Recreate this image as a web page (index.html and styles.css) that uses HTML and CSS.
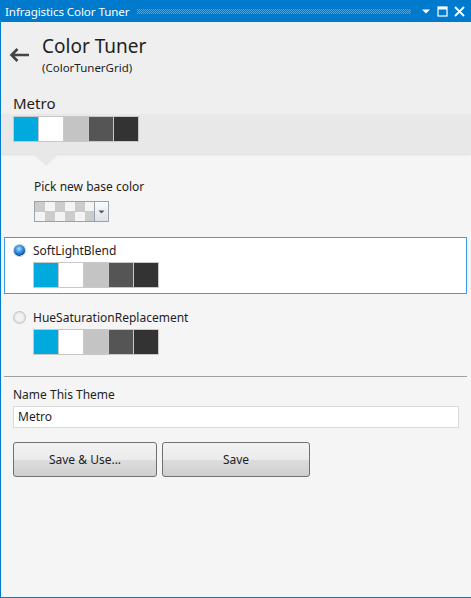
FILE: index.html
```html
<!DOCTYPE html>
<html>
<head>
<meta charset="utf-8">
<link rel="stylesheet" href="styles.css">
</head>
<body>
<div class="window">
  <div class="titlebar">
    <span class="title">Infragistics Color Tuner</span>
    <span class="grip"></span>
    <span class="tb-icons">
      <svg width="10" height="6" viewBox="0 0 10 6"><path d="M1 1.5h8L5 5.5z" fill="#fff"/></svg>
      <svg width="11" height="11" viewBox="0 0 11 11"><rect x="1" y="1" width="9" height="9" fill="none" stroke="#fff" stroke-width="1.2"/><rect x="1" y="1" width="9" height="2.5" fill="#fff"/></svg>
      <svg width="11" height="11" viewBox="0 0 11 11"><path d="M1 1l9 9M10 1l-9 9" stroke="#fff" stroke-width="1.8"/></svg>
    </span>
  </div>
  <div class="header">
    <div class="head-row">
      <svg class="back" width="21" height="16" viewBox="0 0 21 16"><path d="M20 8H2.5M8.5 2L2.5 8l6 6" fill="none" stroke="#444" stroke-width="2.6"/></svg>
      <div class="head-titles">
        <div class="h-title">Color Tuner</div>
        <div class="h-sub">(ColorTunerGrid)</div>
      </div>
    </div>
    <div class="theme-name">Metro</div>
  </div>
  <div class="band">
    <div class="swatches">
      <span class="sw c1"></span><span class="sw c2"></span><span class="sw c3"></span><span class="sw c4"></span><span class="sw c5"></span>
    </div>
    <span class="pointer"></span>
  </div>
  <div class="content">
    <div class="pick">
      <div class="label">Pick new base color</div>
      <div class="picker">
        <span class="checker"></span>
        <span class="dd"><svg width="7" height="4" viewBox="0 0 7 4"><path d="M0.5 0.5h6L3.5 3.5z" fill="#555"/></svg></span>
      </div>
    </div>
    <div class="option selected">
      <div class="opt-head"><span class="radio on"></span><span class="opt-label">SoftLightBlend</span></div>
      <div class="swatches">
        <span class="sw c1"></span><span class="sw c2"></span><span class="sw c3"></span><span class="sw c4"></span><span class="sw c5"></span>
      </div>
    </div>
    <div class="option">
      <div class="opt-head"><span class="radio"></span><span class="opt-label">HueSaturationReplacement</span></div>
      <div class="swatches">
        <span class="sw c1"></span><span class="sw c2"></span><span class="sw c3"></span><span class="sw c4"></span><span class="sw c5"></span>
      </div>
    </div>
    <div class="sep"></div>
    <div class="name-sec">
      <div class="label">Name This Theme</div>
      <div class="textbox">Metro</div>
      <div class="buttons">
        <button class="btn b1">Save &amp; Use...</button>
        <button class="btn b2">Save</button>
      </div>
    </div>
  </div>
</div>
</body>
</html>
```
FILE: styles.css
```css
html, body {
  margin: 0;
  padding: 0;
  background: #F5F5F5;
}
body {
  font-family: "Noto Sans", "Open Sans", sans-serif;
  color: #1E1E1E;
}
.window {
  width: 471px;
  height: 598px;
  box-sizing: border-box;
  border-left: 1px solid #007ACC;
  border-bottom: 1px solid #007ACC;
  background: #F5F5F5;
  overflow: hidden;
}
.titlebar {
  height: 22px;
  background: #007ACC;
  display: flex;
  align-items: center;
  padding-left: 4px;
  color: #fff;
}
.title {
  font-size: 11.6px;
  white-space: nowrap;
  letter-spacing: -0.1px;
}
.grip {
  flex: 1;
  height: 5px;
  margin: 1px 10px 0 8px;
  background-image:
    linear-gradient(45deg, rgba(0,122,204,1) 25%, transparent 25%, transparent 75%, rgba(0,122,204,1) 75%),
    linear-gradient(45deg, rgba(0,122,204,1) 25%, transparent 25%, transparent 75%, rgba(0,122,204,1) 75%);
  background-size: 2px 2px;
  background-position: 0 0, 1px 1px;
  background-color: #4DA3DD;
}
.tb-icons {
  display: flex;
  align-items: center;
  gap: 6px;
  padding-right: 6px;
}
.header {
  background: #EFEFEF;
  height: 92px;
  box-sizing: border-box;
  padding-top: 12px;
}
.head-row {
  display: flex;
  align-items: flex-start;
}
.back {
  margin: 13px 0 0 8px;
}
.head-titles {
  margin-left: 12px;
}
.h-title {
  font-size: 19px;
  line-height: 24px;
  color: #1E1E1E;
}
.h-sub {
  font-size: 11.5px;
  line-height: 16px;
  margin-top: 2px;
}
.theme-name {
  font-size: 15px;
  line-height: 20px;
  margin: 17px 0 0 12px;
}
.band {
  position: relative;
  background: #E8E8E8;
  height: 40px;
  box-sizing: border-box;
  padding: 2px 0 0 12px;
  box-shadow: 0 1px 2px rgba(0,0,0,0.10);
}
.pointer {
  position: absolute;
  left: 32px;
  top: 40px;
  width: 0;
  height: 0;
  border-left: 13px solid transparent;
  border-right: 13px solid transparent;
  border-top: 12px solid #E8E8E8;
}
.swatches {
  display: flex;
  width: fit-content;
  border: 1px solid #C8C8C8;
  gap: 1px;
  background: #C8C8C8;
}
.sw {
  width: 24px;
  height: 24px;
  display: block;
}
.c1 { background: #00AADE; }
.c2 { background: #FFFFFF; }
.c3 { background: #C4C4C4; }
.c4 { background: #555555; }
.c5 { background: #333333; }
.content {
  padding: 0 4px 0 3px;
  font-size: 12px;
}
.pick {
  padding: 25px 0 0 30px;
}
.label {
  font-size: 12px;
  line-height: 16px;
}
.picker {
  display: flex;
  width: 75px;
  height: 21px;
  box-sizing: border-box;
  border: 1px solid #9AA3AD;
  margin-top: 6px;
  background: #fff;
}
.checker {
  width: 59px;
  height: 19px;
  background-color: #fff;
  background-image: conic-gradient(#F4F4F4 25%, #CCCCCC 0 50%, #F4F4F4 0 75%, #CCCCCC 0);
  background-size: 20px 19px;
  border-right: 1px solid #9AA3AD;
}
.dd {
  flex: 1;
  display: flex;
  align-items: center;
  justify-content: center;
  background: linear-gradient(#FAFBFC, #DDE2E8);
}
.option {
  margin-top: 15px;
  border: 1px solid transparent;
  padding: 4px 0 5px 8px;
}
.option.selected {
  background: #fff;
  border-color: #3D9BEA;
}
.option + .option {
  margin-top: 10px;
}
.opt-head {
  display: flex;
  align-items: center;
  height: 16px;
}
.opt-label {
  margin-left: 7px;
}
.radio {
  width: 13px;
  height: 13px;
  box-sizing: border-box;
  border-radius: 50%;
  border: 1px solid #C3C3C3;
  background: radial-gradient(circle, #F2F2F2 0 45%, #E2E2E2 60%, #F4F4F4 100%);
  display: block;
}
.radio.on {
  border-color: #BFC7CF;
  background: radial-gradient(circle at 45% 35%, #BFE3FF 0, #4BA2EC 30%, #1C6ABF 60%, #174E8C 72%, #E4E8EC 76%, #F4F6F8 100%);
}
.option .swatches {
  margin: 4px 0 0 20px;
}
.sep {
  height: 1px;
  background: #A0A0A0;
  margin-top: 15px;
}
.name-sec {
  padding: 10px 8px 0 9px;
}
.textbox {
  margin-top: 3px;
  height: 22px;
  box-sizing: border-box;
  border: 1px solid #DADADA;
  background: #fff;
  padding: 2px 0 0 4px;
  line-height: 16px;
}
.buttons {
  display: flex;
  gap: 5px;
  margin-top: 14px;
}
.btn {
  font-family: inherit;
  font-size: 12px;
  color: #1E1E1E;
  height: 35px;
  border: 1px solid #707070;
  border-radius: 3px;
  background: linear-gradient(#F2F2F2 0%, #EBEBEB 50%, #DDDDDD 51%, #CFCFCF 100%);
  padding: 0;
}
.b1 { width: 144px; }
.b2 { width: 148px; }
```
